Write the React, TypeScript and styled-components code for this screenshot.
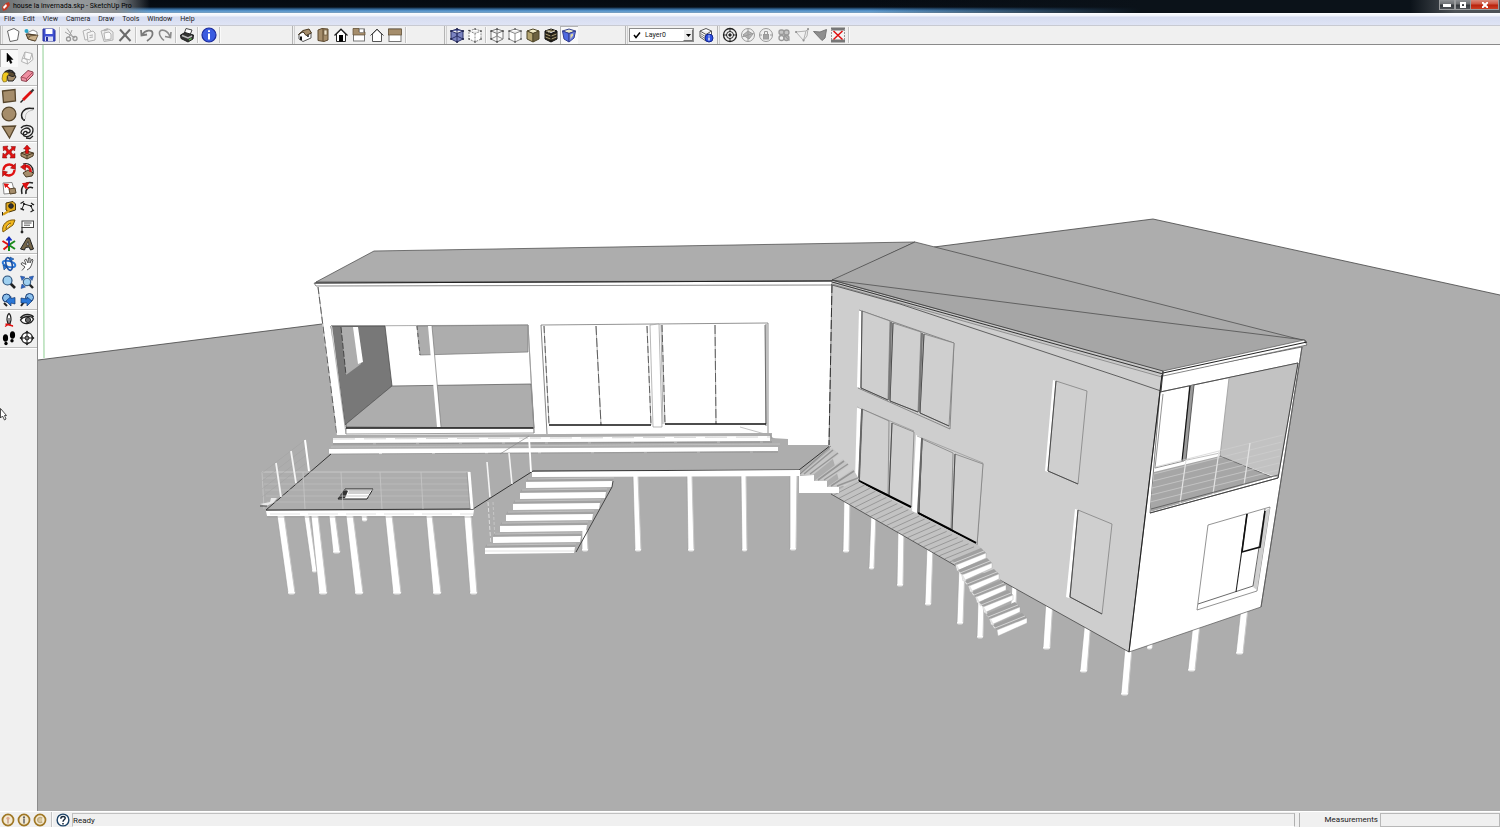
import React from "react";
import styled, { createGlobalStyle } from "styled-components";

const Global = createGlobalStyle`
  * { box-sizing: border-box; }
  body { margin: 0; background: #f0f0f0; }
  body, button, input, select { font-family: Roboto, "Open Sans", sans-serif; color: #1a1a1a; }
  button { border: 0; background: none; padding: 0; }
`;

const Window = styled.div`
  display: flex;
  flex-direction: column;
  height: 100vh;
  min-height: 480px;
  overflow: hidden;
`;

const TitleBar = styled.header`
  display: flex;
  align-items: flex-start;
  justify-content: space-between;
  height: 13px;
  flex: none;
  background:
    linear-gradient(90deg, #6c7072 0, #9a9ea0 60px, #8a8f92 115px, #10182200 150px),
    linear-gradient(90deg, #0b121900 150px, #0b121900 58%, #0b1219 76%, #0b1219 94%, #4c5156 97%),
    linear-gradient(180deg, #060b12 0, #070d15 7px, #2f6292 9px, #5c9bd3 11px, #7c9fbd 13px);
`;

const Title = styled.h1`
  display: flex;
  align-items: center;
  gap: 3px;
  margin: 0;
  padding-left: 2px;
  height: 13px;
  font-size: 7px;
  line-height: 13px;
  font-weight: 400;
  color: #000;
  white-space: nowrap;
`;

const WindowButtons = styled.div`
  display: flex;
  margin-right: 1px;
`;

const WindowButton = styled.button<{ $close?: boolean }>`
  display: flex;
  align-items: center;
  justify-content: center;
  width: ${(p) => (p.$close ? 28 : 16)}px;
  height: 10px;
  border: 1px solid #9a9c9e;
  border-top: 0;
  border-left-width: ${(p) => (p.$close ? 0 : 1)}px;
  background: ${(p) =>
    p.$close
      ? "linear-gradient(#d88a7c 0, #cf5540 4px, #b8220c 5px, #d2452a 10px)"
      : "linear-gradient(#8c8f92 0, #6d7073 4px, #34383c 5px, #55595d 10px)"};
`;

const MenuBar = styled.nav`
  display: flex;
  align-items: center;
  gap: 8px;
  height: 13px;
  flex: none;
  padding-left: 4px;
  border-bottom: 1px solid #c8cad2;
  background: linear-gradient(#fdfdff 0, #eef1fa 3px, #d6dcf0 4px, #dfe4f5 12px);
`;

const MenuItem = styled.button`
  font-size: 7px;
  line-height: 11px;
`;

const ToolBar = styled.div`
  display: flex;
  height: 19px;
  flex: none;
  border-bottom: 1px solid #8a8a8a;
  background: #f0f0f0;
`;

const Segment = styled.div<{ $span?: number }>`
  display: flex;
  align-items: center;
  flex: none;
  width: ${(p) => (p.$span ? p.$span + "px" : "auto")};
`;

const Grip = styled.span`
  width: 3px;
  height: 18px;
  flex: none;
  border-left: 1px solid #b4b4b4;
  border-right: 1px solid #d0d0d0;
  margin-right: 1px;
`;

const Divider = styled.span`
  width: 2px;
  height: 16px;
  margin: 0 1px;
  flex: none;
  border-left: 1px solid #c4c4c4;
  border-right: 1px solid #fafafa;
`;

const ToolButton = styled.button<{ $active?: boolean }>`
  display: flex;
  align-items: center;
  justify-content: center;
  width: 18px;
  height: 18px;
  flex: none;
  background: ${(p) => (p.$active ? "#f9f9f9" : "transparent")};
  box-shadow: ${(p) => (p.$active ? "inset 1px 1px 0 #b4b4b4" : "none")};
`;

const LayerPicker = styled.div`
  display: flex;
  align-items: center;
  width: 65px;
  height: 14px;
  margin: 0 3px 0 0;
  padding-left: 3px;
  border: 1px solid #8c8c8c;
  background: #fff;
`;

const LayerSelect = styled.select`
  appearance: none;
  flex: 1;
  min-width: 0;
  height: 12px;
  padding: 0 0 0 4px;
  border: 0;
  outline: 0;
  background: transparent;
  font-size: 7px;
  line-height: 12px;
`;

const DropMark = styled.span`
  display: flex;
  align-items: center;
  justify-content: center;
  width: 10px;
  height: 12px;
  border: 1px solid #fff;
  border-right-color: #777;
  border-bottom-color: #777;
  background: #ececec;
`;

const Body = styled.div`
  display: flex;
  flex: 1;
  min-height: 0;
`;

const Side = styled.aside`
  width: 38px;
  flex: none;
  padding-top: 4px;
  border-right: 1px solid #8c8c8c;
  background: #f0f0f0;
`;

const SideGroup = styled.div`
  display: grid;
  grid-template-columns: 18px 18px;
  border-bottom: 1px solid #bdbdbd;
  box-shadow: 0 1px 0 #fff;
  margin-bottom: 1px;
`;

const Pointer = styled.svg`
  display: block;
  margin-top: 60px;
`;

const Scene = styled.svg`
  display: block;
  flex: 1;
  min-width: 0;
  height: 100%;
  background: #fff;
`;

const StatusBar = styled.footer`
  display: flex;
  align-items: center;
  height: 16px;
  flex: none;
  padding-left: 1px;
  border-top: 1px solid #fff;
  background: #f0f0f0;
  font-size: 8px;
  line-height: 14px;
`;

const StatusButton = styled.button`
  display: flex;
  width: 14px;
  height: 14px;
  margin-right: 2px;
`;

const StatusDivider = styled(Divider)`
  margin: 0 3px 0 2px;
`;

const StatusText = styled.output`
  flex: 1;
  height: 14px;
  margin-right: 4px;
  border: 1px solid #c0c0c0;
  border-bottom-color: #fff;
  border-right-color: #b0b0b0;
  line-height: 14px;
`;

const MeasureLabel = styled.label`
  width: 81px;
  padding-right: 2px;
  border-left: 1px solid #b0b0b0;
  text-align: right;
`;

const MeasureInput = styled.input`
  width: 120px;
  height: 14px;
  border: 1px solid #b8b8b8;
  background: #f0f0f0;
  font-size: 8px;
`;

/* ---------- icons ---------- */

const Icon = ({ children, size = 16 }: { children: React.ReactNode; size?: number }) => (
  <svg width={size} height={size} viewBox="0 0 16 16" fill="none" stroke="#222" strokeWidth="1" aria-hidden="true">
    {children}
  </svg>
);

const TAN = "#a58d6b";
const RED = "#e01010";

const cubeEdges = "M2 4 8 2 14 4 14 12 8 15 2 12ZM2 4 8 6.5 14 4M8 6.5V15";

const icons: Record<string, React.ReactNode> = {
  new: <path d="M2.500 4 9 1.500 14 4.500 12.500 13 5 14.500Z" fill="#fff" stroke="#666" />,
  open: (
    <>
      <path d="M4 6 10 3 14 5 14 9Z" fill="#fff" stroke="#666" strokeWidth=".7" />
      <path d="M3 7 13 8 12 14 5 12Z" fill={TAN} stroke="#4a3a24" />
      <path d="M5 12 7 9 15 8 12.500 14Z" fill="#c9b08a" stroke="#4a3a24" strokeWidth=".7" />
      <circle cx="3.500" cy="4" r="2" fill="#27a5c8" stroke="none" />
    </>
  ),
  save: (
    <>
      <path d="M2 2H12.500L14 3.500V14H2Z" fill="#3f4fd0" stroke="#26309a" />
      <rect x="4.500" y="2" width="7" height="5" fill="#fff" stroke="none" />
      <rect x="4" y="9.500" width="8" height="4.500" fill="#d5d9f4" stroke="none" />
      <path d="M6 10V14" stroke="#26309a" strokeWidth="2" />
    </>
  ),
  cut: (
    <g stroke="#9a9a9a" strokeWidth="1.300">
      <path d="M4 1.500 10 10M9 3 6 10M2 5 12 11" strokeWidth=".9" />
      <circle cx="5.500" cy="12" r="2" />
      <circle cx="12" cy="11.500" r="2" />
    </g>
  ),
  copy: (
    <g stroke="#b2b2b2">
      <path d="M2 4 8 2 10 4V12L4 13Z" fill="#f4f4f4" />
      <path d="M6 6 12 4 14 6V13L7 14.500Z" fill="#f4f4f4" />
      <path d="M8.500 8.500 12 8M8.500 10.500 12 10" />
    </g>
  ),
  paste: (
    <g stroke="#b2b2b2">
      <path d="M2 4 10 2 14 5V13L5 14.500Z" fill="#ececec" />
      <path d="M5 6 10 5 12 7V12L6 13Z" fill="#fafafa" />
      <path d="M5 3.500 9 2" strokeWidth="2" />
    </g>
  ),
  erase: <path d="M3 2.500 13.500 14M13 2.500 2.500 14" stroke="#6a6a6a" strokeWidth="2" />,
  undo: (
    <path d="M2 3 2.500 8.500 8 7.500M3 8C6 3 13 2 13.500 6 14 9 11 12 8 14" stroke="#7a7a7a" strokeWidth="1.800" />
  ),
  redo: (
    <path d="M14 5 13.500 10.500 8 9.500M13 10C11 3 4 1.500 2.500 5 2 8 4 11 7 13.500" stroke="#8a8a8a" strokeWidth="1.600" />
  ),
  print: (
    <>
      <path d="M5 7 7 1.500 13 3 11 8Z" fill="#fff" stroke="#444" />
      <path d="M1.500 8 6 5.500 14.500 8 14 12 9 15 2 11.500Z" fill="#333" />
      <path d="M3 8.500 9 11 13 9" stroke="#bdbdbd" strokeWidth="1.500" />
      <path d="M10 13 12.500 11.500" stroke="#5fbf50" strokeWidth="1.400" />
    </>
  ),
  info: (
    <>
      <circle cx="8" cy="8" r="7" fill="#3a5be0" stroke="#1b2a9c" strokeWidth="1.200" />
      <path d="M8 3.200V5M8 6.500V12.500" stroke="#fff" strokeWidth="2" />
    </>
  ),
  iso: (
    <>
      <path d="M2 7V12L6 14.500 14 11V6L9 8 6 5Z" fill="#fff" stroke="#555" />
      <path d="M1.500 7.500 6 3.500 12 2 14.500 6 9 8.500 6 4.500Z" fill={TAN} stroke="#4a3a24" />
      <path d="M4 13V9.500" stroke="#111" strokeWidth="2" />
      <path d="M11 8V10" strokeWidth="1.600" />
    </>
  ),
  top: (
    <>
      <path d="M3 3 7 1.500 13 2V13L9 14.500 3 13.500Z" fill={TAN} stroke="#5d4a30" />
      <path d="M8 2V14" stroke="#5d4a30" />
      <rect x="9" y="3" width="3" height="5" fill="#eee2c8" stroke="#5d4a30" strokeWidth=".6" />
    </>
  ),
  front: (
    <>
      <path d="M3.500 7V14.500H12.500V7L8 2.500Z" fill="#fff" />
      <path d="M1.500 8.500 8 2 14.500 8.500" strokeWidth="1.200" />
      <rect x="6" y="8" width="4" height="6.500" fill="#000" stroke="none" />
    </>
  ),
  right: (
    <>
      <rect x="2.500" y="2" width="11" height="12" fill="#fff" stroke="#777" />
      <path d="M2 1.500H8V5H14V8H2Z" fill={TAN} stroke="#5d4a30" strokeWidth=".7" />
      <rect x="8.500" y="2" width="4" height="3.500" fill="#fff" stroke="#777" strokeWidth=".6" />
    </>
  ),
  back: (
    <>
      <path d="M3.500 7V14.500H12.500V7L8 2.500Z" fill="#fff" stroke="#555" />
      <path d="M1.500 8.500 8 2 14.500 8.500" stroke="#444" />
    </>
  ),
  left: (
    <>
      <rect x="2" y="2" width="12" height="12.500" fill="#fff" stroke="#777" />
      <rect x="1.500" y="2" width="13" height="6" fill={TAN} stroke="#5d4a30" strokeWidth=".7" />
    </>
  ),
  xray: (
    <>
      <path d={cubeEdges} fill="#7a83c0" stroke="#2d3268" />
      <path d="M2 12 8 9 14 12M8 2V9" stroke="#2d3268" />
      <path d="M2 4h.1M8 2h.1M14 4h.1M8 15h.1M2 12h.1M14 12h.1" stroke="#20244e" strokeWidth="2" strokeLinecap="round" />
    </>
  ),
  backEdges: (
    <>
      <path d={cubeEdges} fill="#fff" stroke="#888" strokeDasharray="2 1" />
      <path d="M2 3.500h.1M8 2h.1M14 4h.1M8 15h.1M2 12h.1M14 12h.1" stroke="#333" strokeWidth="1.600" strokeLinecap="round" />
    </>
  ),
  wire: (
    <>
      <path d={cubeEdges} stroke="#777" fill="#fafafa" />
      <path d="M2 12 8 9 14 12M8 2V9" stroke="#888" />
      <path d="M2 4h.1M8 2h.1M14 4h.1M8 15h.1M2 12h.1" stroke="#222" strokeWidth="1.600" strokeLinecap="round" />
    </>
  ),
  hidden: (
    <>
      <path d={cubeEdges} fill="#fff" stroke="#8a8a8a" />
      <path d="M2 4h.1M8 2h.1M14 4h.1M8 15h.1M2 12h.1M14 12h.1" stroke="#333" strokeWidth="1.600" strokeLinecap="round" />
    </>
  ),
  shaded: (
    <>
      <path d="M2 4 8 2 14 4 8 6.500Z" fill="#f2ecc8" stroke="#4f4628" />
      <path d="M2 4 8 6.500V15L2 12Z" fill="#b5a571" stroke="#4f4628" />
      <path d="M14 4 8 6.500V15L14 12Z" fill="#6d6240" stroke="#4f4628" />
    </>
  ),
  textured: (
    <>
      <path d={cubeEdges} fill="#2a2418" stroke="#111" />
      <path d="M3 4.200 9 2.800M5 5.300 12 3.500M2.500 7 7.500 9M2.500 10 7.500 12M8.500 9 13.500 7M8.500 12 13.500 10" stroke="#a89a70" />
    </>
  ),
  mono: (
    <>
      <path d="M1.500 4 8 2 14.500 4 8 6.500Z" fill="#eceac8" stroke="#333f90" />
      <path d="M1.500 4 8 6.500V15L3 12Z" fill="#4f6ae0" stroke="#333f90" />
      <path d="M14.500 4 8 6.500V15L13 11Z" fill="#6d80e4" stroke="#333f90" />
      <path d="M9.500 7.500 12 6.500V8.500L9.500 12Z" fill="#e0d7a0" stroke="none" />
    </>
  ),
  layers: (
    <>
      <path d="M2 4 8 1.500 13.500 4 8 7.500ZM2 4V10L8 14 13.500 11V4" fill="#fff" stroke="#555" />
      <path d="M2.500 6.500 8 10M2.500 8.500 8 12M8 7.500V13" stroke="#777" />
      <circle cx="11" cy="11" r="4" fill="#2c4fe0" stroke="#14268e" />
      <path d="M11 8.500V9.500M11 10.500V13.500" stroke="#fff" strokeWidth="1.300" />
    </>
  ),
  target: (
    <>
      <circle cx="8" cy="8" r="6.500" strokeWidth="1.300" />
      <circle cx="8" cy="8" r="3.500" />
      <circle cx="8" cy="8" r="1.200" fill="#222" />
      <path d="M8 1.500V5M8 11V14.500M1.500 8H5M11 8H14.500" />
    </>
  ),
  targetOff: (
    <g stroke="#9c9c9c">
      <circle cx="8" cy="8" r="6.500" />
      <path d="M3 8 8 4 13 7 9 12Z" fill="#b4b4b4" />
      <path d="M2 10 14 6M8 2V14" />
    </g>
  ),
  lock: (
    <g stroke="#9a9a9a">
      <circle cx="8" cy="8" r="6.500" />
      <rect x="5.500" y="7.500" width="5" height="4.500" fill="#a4a4a4" />
      <path d="M6.500 7.500V4.500H9.500V7.500M2 8H4M12 8H14" />
    </g>
  ),
  swirl: (
    <g stroke="#999" strokeWidth="1.300">
      <rect x="3" y="3" width="5" height="4.500" rx="2" fill="#c4c4c4" />
      <circle cx="10.500" cy="5.500" r="2.500" fill="#c4c4c4" />
      <circle cx="5.500" cy="11" r="2.500" />
      <circle cx="10.500" cy="11" r="2.500" fill="#c4c4c4" />
      <path d="M8 8 13.500 13.500" />
    </g>
  ),
  plane: (
    <g stroke="#b0b0b0">
      <path d="M2 5 12 4 14 2M2 5 9.500 13.500 12 4M14 2 13 9 9.500 13.500" />
      <path d="M14 2h.1M2 5h.1M9.500 13.500h.1" stroke="#909090" strokeWidth="2" strokeLinecap="round" />
    </g>
  ),
  planeFill: <path d="M1.500 4.500 8 5 14.500 2.500 13 11 10 13.500Z" fill="#8e8e8e" stroke="#777" />,
  clip: (
    <>
      <rect x="1.500" y="2" width="13" height="12" fill="#f4f4f4" stroke="none" />
      <path d="M1 2H15M1 14H15" stroke="#777" strokeWidth="3" />
      <path d="M1.500 2V14M14.500 2V14" stroke="#999" strokeDasharray="2 1" />
      <path d="M3.500 4 12.500 12.500M12.500 4 3.500 12.500" stroke={RED} strokeWidth="1.500" />
    </>
  ),
  select: <path d="M6 3V12L8 10 9.500 13.500 11 12.800 9.500 9.500H12Z" fill="#000" stroke="#000" strokeWidth=".5" />,
  component: (
    <g stroke="#b4b4b4">
      <path d="M6 2 13 3.500 14 9.500 8.500 14 2.500 11.500 3.500 8Z" fill="#fafafa" />
      <path d="M6 2 5.500 8.500 11 10 13 3.500M3.500 8 8 9.500 8.500 14" />
    </g>
  ),
  paint: (
    <>
      <path d="M3 7C3 3 8 1.500 11 3L14 6" stroke="#222" strokeWidth="1.600" />
      <path d="M6 6 12 4 15 9 12 13 7 13Z" fill={TAN} stroke="#222" />
      <ellipse cx="10" cy="6" rx="4" ry="2" fill="#5a4a30" transform="rotate(20 10 6)" />
      <path d="M1.500 8C1.500 4 6 3 8 6L6 8 5.500 13.500 2.500 14 1 11Z" fill="#f0c81e" stroke="#7a6410" strokeWidth=".7" />
    </>
  ),
  eraser: (
    <>
      <path d="M2 9 9 2.500 14 4 14 7 7.500 13.500 2.500 12.500Z" fill="#ef8ea0" stroke="#8c4450" />
      <path d="M2 9 7.500 10.500 14 4M7.500 10.500V13.500" stroke="#a8505f" />
    </>
  ),
  rect: <path d="M1.500 3 14 1.500 14.500 13 2.500 14.500Z" fill={TAN} stroke="#57462c" strokeWidth="1.300" />,
  line: (
    <>
      <path d="M4 12 12.500 3.500" stroke={RED} strokeWidth="2.800" />
      <path d="M12 4 14.500 1.500" stroke="#333" strokeWidth="2.200" />
      <path d="M1.500 14.500 4 12" strokeWidth="1.400" />
    </>
  ),
  circle: <circle cx="8" cy="8" r="6.900" fill={TAN} stroke="#57462c" strokeWidth="1.300" />,
  arc: (
    <>
      <path d="M13 2.500C5 1 0 8 4 13.500" strokeWidth="1.500" />
      <path d="M14 4C8 5 6 8 6.500 13" stroke="#aaa" strokeWidth=".7" />
      <path d="M14 2.500h.1M5 14h.1" strokeWidth="2" strokeLinecap="round" />
    </>
  ),
  polygon: <path d="M1.500 2.500 14.500 2 8.500 14Z" fill={TAN} stroke="#57462c" strokeWidth="1.300" />,
  free: (
    <path
      d="M2 4C5 0 14 1 14 6 14 11 9 14 5 12 3 9 6 6 8 8 9 11 4 12 2 9 2 5 9 2 11 6 12 9 8 10 7 7M7 14 11 14.500 14 12"
      strokeWidth="1.300"
    />
  ),
  move: (
    <g fill={RED} stroke="#7d0909" strokeWidth=".5">
      <path d="M2 2.500 7 2 6 4 8 6.500 11 4 10 2.500 14.500 2.500 13.500 7 12 5.500 10 8 12 10.500 14 9.500 14 14 9 14 10 12 8 9.500 5 12 6 14 1.500 14 2 9 4 10.500 6 8 4 5.500 2.500 7Z" />
    </g>
  ),
  push: (
    <>
      <path d="M2 9 8 7 14.500 9 14 12 8 15 2 12Z" fill={TAN} stroke="#4a3a24" />
      <path d="M2 9 8 11.500 14.500 9M8 11.500V15" stroke="#4a3a24" />
      <path d="M8 1 11.500 5H9.500V9.500H6.500V5H4.500Z" fill={RED} stroke="#7d0909" strokeWidth=".5" />
    </>
  ),
  rotate: (
    <>
      <path d="M2.500 8C3 2 10 1 13 5" stroke={RED} strokeWidth="2.400" />
      <path d="M13.500 8C13 14 6 15 3 11" stroke={RED} strokeWidth="2.400" />
      <path d="M14.500 1.500V7.500L9.500 6ZM1.500 14.500V8.500L6.500 10Z" fill={RED} stroke="#7d0909" strokeWidth=".5" />
    </>
  ),
  follow: (
    <>
      <path d="M4 11 9 8 14.500 11 13 14 7 15Z" fill={TAN} stroke="#4a3a24" />
      <path d="M4 2C10 0 15 5 14 11" stroke="#222" strokeWidth="1.200" />
      <path d="M5 4.500C9 3 12 6 11.500 10" stroke={RED} strokeWidth="2.600" />
      <path d="M1.500 5 6.500 1.500V8.500Z" fill={RED} stroke="#7d0909" strokeWidth=".5" />
    </>
  ),
  scale: (
    <>
      <path d="M2 3 11 2.500 14 13 3 14Z" fill="#fff" stroke="#888" />
      <path d="M8 9 14 8 15 13 9 14Z" fill={TAN} stroke="#57462c" />
      <path d="M9 9 4 4.500M3.500 4 7 4.500 4.500 7Z" fill={RED} stroke={RED} strokeWidth="1.200" />
    </>
  ),
  offset: (
    <>
      <path d="M14 3C7 1 1 6 3 14M14 8C10 6 6 9 7 14" strokeWidth="1.500" />
      <path d="M9 9 6 5M4 3.500 9.500 3 6.500 8Z" fill={RED} stroke={RED} strokeWidth="1.200" />
    </>
  ),
  tape: (
    <>
      <path d="M5 3 12 1.500 14.500 4V10L8 12 5 10Z" fill="#e2a91c" stroke="#4a3608" />
      <circle cx="10" cy="6" r="2.300" fill="#333" />
      <path d="M2 14.500 8 11" stroke="#d9a016" strokeWidth="2.200" />
      <path d="M1.500 12V15.500" />
    </>
  ),
  dimension: (
    <>
      <path d="M3 9 5 4 12 6 14 11M3 2 6 5M12 6 14 4" />
      <path d="M1.500 3.500 5 1.500M12 3 15 5M1.500 8.500 5 10M11.500 12 15 10" strokeWidth="1.400" />
      <path d="M5 4h.1M12 6h.1" strokeWidth="2.200" strokeLinecap="round" />
    </>
  ),
  protractor: (
    <>
      <path d="M2 14C0 7 6 1 14 2L12 7Z" fill="#f2b71d" stroke="#7d5a08" />
      <path d="M5 11C5 8 7 6 10 5" fill="#f0f0f0" stroke="#7d5a08" />
    </>
  ),
  label: (
    <>
      <rect x="3" y="3" width="11.500" height="6.500" fill="#fff" stroke="#444" />
      <path d="M5 5H12.500M5 7.200H11" stroke="#555" />
      <path d="M3 9V14" />
      <circle cx="3" cy="14" r="1" fill="#000" />
    </>
  ),
  axes: (
    <>
      <path d="M1.500 5 8 9M2.500 13.500 8 9" stroke={RED} strokeWidth="2" />
      <path d="M8 9 14 5M8 15V9M8 9 14 13" stroke="#1a8a1a" strokeWidth="2" />
      <path d="M8 10V2M5.500 4.500 8 1.500 10.500 4.500" stroke="#1530c0" strokeWidth="1.800" />
    </>
  ),
  text3d: (
    <>
      <path d="M1.500 13 8 2 10.500 2 14.500 13 11.500 14 10 11 6.500 11.500 5.500 14Z" fill="#75664a" stroke="#222" />
      <path d="M7.500 9 9 5.500 10 9Z" fill="#f0f0f0" strokeWidth=".7" />
    </>
  ),
  orbit: (
    <>
      <ellipse cx="8" cy="8" rx="6.500" ry="3" stroke="#2b78d8" strokeWidth="2" transform="rotate(15 8 8)" />
      <ellipse cx="8" cy="8" rx="3" ry="6.500" stroke="#1c4fa0" strokeWidth="1.600" transform="rotate(-15 8 8)" />
      <path d="M9 1 13 3 9 5.500ZM2 9 6 11 3 14Z" fill="#2b78d8" stroke="#12366f" strokeWidth=".5" />
    </>
  ),
  pan: (
    <path
      d="M3 14.500 6 11 2 8 3 6.500 7 8.500 5.500 4 7 3 9 7 9.500 2 11 2 11 7 13 3 14 4 12.500 9 11 12 8 14"
      fill="#fff"
      stroke="#555"
    />
  ),
  zoom: (
    <>
      <path d="M9.500 9.500 14 14" strokeWidth="2.600" />
      <circle cx="6.500" cy="6.500" r="4.500" fill="#9fd0f0" stroke="#2a4f78" strokeWidth="1.200" />
    </>
  ),
  extents: (
    <>
      <path d="M10 10 14 14" strokeWidth="2.400" />
      <path d="M1.500 2 6 3 3 6.500ZM14.500 2 10 3 13 6.500ZM2 14.500 3 10 6.500 13Z" fill="#2b66c8" stroke="#173a7c" strokeWidth=".5" />
      <circle cx="8" cy="8" r="3.800" fill="#9fd0f0" stroke="#2a4f78" />
    </>
  ),
  previous: (
    <>
      <path d="M3 11 6 14" strokeWidth="2" />
      <circle cx="5.500" cy="6" r="4" fill="#8cc0ec" stroke="#12366f" />
      <path d="M5 9 10 4.500V6.500L14 5.500 14 12 10 11V14Z" fill="#2b78d8" stroke="#12366f" strokeWidth=".7" />
    </>
  ),
  next: (
    <>
      <path d="M5 10 2 14" strokeWidth="2" />
      <circle cx="10.500" cy="5.500" r="4" fill="#8cc0ec" stroke="#12366f" />
      <path d="M13 9 8 5V7L2 6 2 11 8 11V14Z" fill="#2b78d8" stroke="#12366f" strokeWidth=".7" />
    </>
  ),
  position: (
    <>
      <path d="M8 1.500C10 3 10 6 10 8L9 12H7L6 8C6 6 6 3 8 1.500Z" fill="#fff" strokeWidth="1.200" />
      <path d="M4 14.500 8 12 12 14.500M4.500 12 12 14" stroke={RED} strokeWidth="1.300" />
      <path d="M8 6V12" />
    </>
  ),
  look: (
    <>
      <path d="M1.500 8C4 4 12 3 14.500 7 12 13 4 13 1.500 8Z" fill="#fff" strokeWidth="1.300" />
      <circle cx="9" cy="8" r="2.600" fill="#666" />
      <path d="M1.500 6C5 1 12 2 14.500 5" strokeWidth="1.600" />
    </>
  ),
  walk: (
    <g fill="#000" stroke="none">
      <ellipse cx="4.500" cy="8" rx="2.600" ry="3.800" />
      <ellipse cx="5" cy="13.500" rx="1.700" ry="1.700" />
      <ellipse cx="11.500" cy="5" rx="2.600" ry="3.800" />
      <ellipse cx="11" cy="10.700" rx="1.700" ry="1.700" />
    </g>
  ),
  section: (
    <>
      <circle cx="8" cy="8" r="5.500" fill="#fff" strokeWidth="1.200" />
      <path d="M8 1V15M1 8H15" />
      <circle cx="8" cy="8" r="2" fill="#777" />
      <path d="M8 .5 10.500 3.500H5.500ZM8 15.500 10.500 12.500H5.500ZM.5 8 3.500 5.500V10.500ZM15.500 8 12.500 5.500V10.500Z" fill="#222" stroke="none" />
    </>
  ),
  coin: (
    <>
      <circle cx="8" cy="8" r="6.300" fill="#f4ead2" stroke="#a07826" strokeWidth="2" />
      <circle cx="8" cy="6" r="1.800" fill="#e0a890" stroke="none" />
      <path d="M8 7V12" stroke="#c49a86" strokeWidth="1.600" />
    </>
  ),
  coinDark: (
    <>
      <circle cx="8" cy="8" r="6.300" fill="#f4ead2" stroke="#a07826" strokeWidth="2" />
      <circle cx="8" cy="5" r="1.300" fill="#666" stroke="none" />
      <path d="M8 6.500V12" stroke="#777" strokeWidth="2" />
    </>
  ),
  coinRing: (
    <>
      <circle cx="8" cy="8" r="6.300" fill="#f4ead2" stroke="#a07826" strokeWidth="2" />
      <path d="M10.500 6A3 3 0 1 0 10.500 10" fill="#d8c69c" stroke="#c0ab80" strokeWidth="1.500" />
    </>
  ),
  help: (
    <>
      <circle cx="8" cy="8" r="6.700" fill="#fff" stroke="#1e4468" strokeWidth="1.600" />
      <path d="M5.500 6.500C5.500 3 10.800 3.200 10.500 6 10.300 7.800 8 7.800 8 10M8 11.300V13" stroke="#14263a" strokeWidth="1.700" />
    </>
  ),
};

const Tools = ({ names, active }: { names: string[]; active?: string }) => (
  <>
    {names.map((n) => (
      <ToolButton key={n} $active={n === active} aria-label={n}>
        <Icon>{icons[n]}</Icon>
      </ToolButton>
    ))}
  </>
);

const sideGroups = [
  ["select", "component", "paint", "eraser"],
  ["rect", "line", "circle", "arc", "polygon", "free"],
  ["move", "push", "rotate", "follow", "scale", "offset"],
  ["tape", "dimension", "protractor", "label", "axes", "text3d"],
  ["orbit", "pan", "zoom", "extents", "previous", "next"],
  ["position", "look", "walk", "section"],
];

/* ---------- model ---------- */

const GROUND = "#adadad";

type Quad = number[];
const pts = (q: Quad) => q.reduce((s, v, i) => s + v + (i % 2 ? " " : ","), "");

const Face = ({ q, fill = "#fff", line = "none", w = 0.7 }: { q: Quad; fill?: string; line?: string; w?: number }) => (
  <polygon points={pts(q)} fill={fill} stroke={line} strokeWidth={w} />
);

const Edge = ({ q, c = "#444", w = 0.8, dash }: { q: Quad; c?: string; w?: number; dash?: string }) => (
  <polyline points={pts(q)} fill="none" stroke={c} strokeWidth={w} strokeDasharray={dash} />
);

/* a continuous grey edge with darker dashes over it */
const Seam = ({ q, dash = "7 3" }: { q: Quad; dash?: string }) => (
  <>
    <Edge q={q} c="#a8a8a8" w={0.9} />
    <Edge q={q} c="#555" w={0.9} dash={dash} />
  </>
);

/* top-left x, top-right x, top y, bottom-left x, bottom-right x, bottom y */
const piles: Quad[] = [
  [304, 309, 515, 312, 317, 571], [329, 335, 515, 333, 340, 552], [361, 367, 515, 362, 367, 520],
  [277, 284, 515, 288, 295, 593], [311, 318, 515, 319, 327, 593], [346, 353, 515, 355, 363, 593],
  [385, 392, 515, 393, 401, 593], [426, 432, 515, 433, 441, 593], [464, 471, 515, 470, 477, 593],
  [582, 587, 530, 582, 588, 550], [633, 638, 476, 635, 641, 550], [687, 692, 476, 688, 694, 550],
  [741, 746, 476, 742, 747, 550], [790, 797, 476, 790, 796, 549], [844, 850, 498, 843, 849, 551],
  [871, 876, 514, 869, 874, 568], [898, 904, 530, 897, 903, 585], [927, 933, 546, 925, 931, 604],
  [959, 965, 566, 957, 963, 623], [978, 984, 600, 977, 983, 637], [1012, 1017, 584, 1011, 1016, 604],
  [1046, 1053, 600, 1043, 1050, 648], [1085, 1091, 620, 1080, 1087, 671], [1125, 1132, 648, 1121, 1128, 694],
  [1147, 1153, 642, 1147, 1152, 648], [1193, 1200, 624, 1188, 1195, 670], [1241, 1248, 608, 1236, 1243, 653],
];

const stairs: Quad[] = [
  [526, 613, 481], [520, 606, 492], [513, 600, 503], [506, 593, 514], [500, 587, 525], [493, 581, 536], [485, 575, 547],
];

const lowSteps: Quad[] = [
  [956, 565, 986, 553], [962, 575, 992, 563], [969, 586, 999, 574], [976, 597, 1006, 585],
  [983, 607, 1013, 595], [990, 619, 1020, 607], [997, 630, 1027, 618],
];

const landingSteps: Quad[] = [
  [800, 475, 832, 448, 839, 454, 813, 475],
  [814, 481, 843, 459, 849, 465, 827, 481],
  [827, 487, 853, 469, 859, 479, 840, 487],
];

const sidePanes: Quad[] = [
  [862, 311, 890, 321, 888, 400, 861, 388], [893, 323, 921, 332, 918, 412, 890, 401],
  [924, 334, 954, 343, 949, 426, 920, 413], [862, 409, 889, 421, 888, 495, 859, 481],
  [892, 423, 914, 432, 911, 507, 889, 496], [922, 439, 953, 453, 951, 529, 919, 513],
  [955, 454, 983, 464, 977, 545, 952, 530], [1056, 381, 1087, 391, 1078, 484, 1048, 471],
  [1078, 510, 1112, 524, 1102, 614, 1070, 597],
];

const range = (n: number) => Array.from({ length: n }, (_, i) => i);

const House = () => (
  <Scene viewBox="38 45 1462 766" preserveAspectRatio="xMinYMin slice" role="img" aria-label="House model">
    <Face q={[38, 360, 322, 324, 934, 247, 1153, 219, 1500, 295, 1500, 811, 38, 811]} fill={GROUND} />
    <Edge q={[38, 360, 322, 324]} />
    <Edge q={[934, 247, 1153, 219, 1500, 295]} />
    <Edge q={[43, 45, 44, 358]} c="#8fce93" w={1} />

    {piles.map((p, i) => (
      <g key={i}>
        <Face q={[p[0], p[2], p[1], p[2], p[4], p[5], p[3], p[5]]} />
        <Edge q={[p[0], p[2], p[3], p[5]]} c="#9a9a9a" w={0.6} />
        <Edge q={[p[1], p[2], p[4], p[5]]} c="#c8c8c8" w={1} />
        <ellipse cx={(p[3] + p[4]) / 2} cy={p[5]} rx={(p[4] - p[3]) / 2} ry="1.500" fill="#fff" />
        <Edge q={[p[3], p[5] + 1, p[4], p[5] + 1]} c="#a0a0a0" w={0.5} />
      </g>
    ))}

    {/* left wing */}
    <Face q={[317, 286, 832, 283, 829, 445, 788, 446, 770, 436, 337, 437]} />
    <Seam q={[318, 287, 337, 436]} />
    <Face q={[316, 282, 374, 251, 915, 242, 832, 281]} fill={GROUND} line="#444" />
    <Face q={[314, 283, 832, 281, 832, 285, 316, 286]} line="#555" />
    <Edge q={[315, 283, 832, 281]} c="#222" w={1.2} />

    <Face q={[331, 326, 528, 325, 534, 428, 345, 429]} line="#888" />
    <Face q={[331, 326, 385, 326, 392, 386, 345, 425]} fill="#787878" line="#444" />
    <Face q={[341, 327, 354, 327, 361, 364, 346, 375]} fill={GROUND} />
    <Edge q={[341, 327, 346, 375]} c="#333" w={0.8} dash="6 2" />
    <Face q={[353, 327, 358, 327, 363, 362, 358, 364]} />
    <Face q={[417, 326, 528, 325, 528, 352, 420, 355]} fill={GROUND} line="#777" />
    <Face q={[392, 386, 531, 384, 534, 428, 346, 427, 346, 424]} fill={GROUND} line="#555" />
    <Face q={[428, 326, 432, 326, 441, 427, 437, 427]} />
    <Edge q={[432, 326, 441, 427]} c="#777" w={0.7} />
    <Seam q={[417, 326, 420, 355]} dash="4 3" />
    <Face q={[331, 326, 332, 326, 346, 434, 337, 436]} />
    <Edge q={[331, 326, 346, 434]} c="#888" w={0.6} />
    <Face q={[346, 428, 534, 428, 534, 433, 346, 434]} line="#777" />
    <Edge q={[346, 428, 534, 428]} c="#222" w={1.3} />
    <Edge q={[528, 325, 534, 433]} c="#999" />

    <Edge q={[541, 325, 768, 323, 768, 434]} c="#777" />
    <Face q={[765, 324, 768, 324, 768, 426, 765, 426]} fill="#c0c0c0" />
    <Edge q={[541, 325, 547, 434]} c="#666" />
    <Seam q={[544, 326, 549, 424]} />
    <Seam q={[596, 326, 601, 425]} dash="9 3" />
    <Seam q={[647, 326, 651, 425]} />
    <Face q={[650, 325, 659, 324, 662, 427, 653, 427]} line="#999" />
    <Edge q={[661, 325, 663, 424]} c="#999" w={0.8} />
    <Seam q={[662, 325, 665, 424]} />
    <Seam q={[715, 325, 716, 424]} dash="9 3" />
    <Edge q={[765, 325, 766, 424]} c="#555" w={0.8} />
    <Edge q={[549, 425, 651, 425]} c="#111" w={1.5} />
    <Edge q={[665, 424, 766, 424]} c="#111" w={1.5} />
    <Edge q={[740, 427, 772, 436]} c="#999" w={0.6} />

    {/* terrace */}
    <Face q={[334, 435, 772, 433, 772, 438, 788, 439, 788, 445, 831, 445, 799, 470, 533, 471, 473, 509, 267, 510, 331, 454]} fill={GROUND} />
    <Face q={[333, 438, 770, 436, 770, 441, 333, 443]} />
    <Edge q={[333, 444, 772, 442]} c="#8a8a8a" w={0.8} dash="40 3" />
    <Edge q={[333, 439, 770, 437]} c="#c4c4c4" w={0.7} dash="22 9" />
    <Edge q={[331, 447, 780, 444]} c="#c4c4c4" w={0.8} />
    <Face q={[329, 449, 778, 447, 778, 451, 329, 454]} />
    <Edge q={[329, 454, 778, 452]} c="#888" w={0.6} dash="50 3" />
    <Edge q={[770, 434, 772, 439]} c="#999" />
    <Edge q={[831, 445, 799, 470, 533, 471, 473, 509, 266, 510, 331, 454]} c="#333" w={1} />
    <Face q={[532, 472, 800, 470, 800, 476, 532, 477]} />
    <Face q={[266, 511, 474, 510, 473, 516, 267, 516]} />
    <Edge q={[267, 517, 473, 517]} c="#999" w={0.6} />
    <Edge q={[270, 514, 473, 514]} c="#ccc" w={0.6} dash="30 8" />
    <Face q={[345, 489, 373, 489, 367, 499, 338, 499]} line="#222" w={1} />
    <Face q={[345, 489, 348, 491, 345, 498, 338, 499]} fill="#333" />
    <Face q={[349, 490, 371, 490, 369, 494, 348, 494]} fill="#d0d0d0" />

    {range(6).map((i) => (
      <Edge key={i} q={[262 + i, 472 + i * 6, 470, 472 + i * 6]} c={i ? "#bcbcbc" : "#cfcfcf"} w={0.8} />
    ))}
    {[262, 303, 341, 380, 421].map((x) => (
      <Edge key={x} q={[x, 472, x + 2, 509]} c="#c6c6c6" w={0.8} />
    ))}
    {range(4).map((i) => (
      <Edge key={i} q={[262, 473 + i * 8, 305, 440 + i * 8]} c="#a0a0a0" w={0.5} />
    ))}
    <Edge q={[305, 440, 309, 471]} c="#fff" w={2} />
    <Edge q={[291, 451, 296, 483]} c="#f4f4f4" w={1.8} />
    <Edge q={[276, 463, 281, 497]} c="#f4f4f4" w={1.8} />
    <Edge q={[469, 472, 472, 509]} c="#fff" w={3} />
    <Edge q={[467, 472, 470, 509]} c="#888" w={0.5} />
    <Edge q={[487, 462, 490, 497]} c="#f4f4f4" w={1.6} />
    <Edge q={[509, 453, 512, 484]} c="#f4f4f4" w={1.6} />
    <Edge q={[529, 437, 531, 472]} c="#fff" w={1.8} />
    <Edge q={[500, 454, 529, 436]} c="#888" w={0.7} />
    <Edge q={[488, 502, 491, 546]} c="#ddd" w={1} dash="4 2" />
    <Edge q={[493, 502, 495, 540]} c="#ccc" w={0.8} dash="3 2" />
    <Face q={[260, 504, 270, 502, 271, 498, 277, 498, 273, 503, 266, 506]} fill="#e8e8e8" />
    <Edge q={[260, 506, 267, 506]} c="#333" />

    {stairs.map(([l, r, y]) => (
      <g key={y}>
        <Face q={[l + 2, y - 3, r + 1, y - 3, r, y, l, y]} fill="#a2a2a2" />
        <Edge q={[l + 2, y - 2, r + 1, y - 3]} c="#cacaca" w={0.8} />
        <Face q={[l, y + 1, r, y, r - 1, y + 6, l, y + 7]} />
      </g>
    ))}
    <Edge q={[485, 551, 575, 551]} c="#ccc" w={0.6} />
    <Edge q={[613, 481, 612, 487, 576, 552]} c="#444" w={1} />

    {/* right wing, long side */}
    <Face q={[832, 281, 1163, 373, 1161, 391, 1129, 652, 1000, 580, 958, 562, 840, 484, 829, 445]} fill="#cecece" />
    <Edge q={[832, 284, 829, 445]} c="#888" w={1} />
    <Edge q={[832, 284, 829, 445]} c="#333" w={1} dash="9 3" />
    <Edge q={[1000, 580, 1129, 652]} c="#444" />
    <Face q={[832, 280, 915, 242, 1306, 341, 1163, 371]} fill="#a9a9a9" line="#444" />
    <Face q={[832, 280, 887, 287, 1120, 317, 1305, 340, 1163, 371]} fill="#a6a6a6" />
    <Edge q={[832, 280, 887, 287, 1120, 317, 1305, 340]} w={0.7} />
    <Face q={[832, 281, 1163, 371, 1163, 376, 832, 285]} fill="#c8c8c8" />
    <Edge q={[832, 280, 1163, 371]} c="#444" w={0.9} />
    <Edge q={[832, 282, 1163, 374]} c="#333" w={1} />
    <Edge q={[832, 284, 1162, 377]} c="#666" w={0.6} />
    <Edge q={[832, 285, 900, 304, 1120, 377, 1161, 391]} w={0.8} />

    <Face q={[859, 310, 862, 311, 860, 388, 857, 387]} />
    <Face q={[857, 407, 861, 408, 858, 480, 855, 479]} />
    <Face q={[916, 435, 921, 437, 917, 513, 912, 512]} />
    <Face q={[1053, 380, 1056, 381, 1048, 472, 1045, 471]} />
    <Face q={[1075, 509, 1078, 510, 1069, 598, 1066, 597]} />
    <Edge q={[859, 310, 954, 343, 950, 429, 858, 388]} c="#777" />
    <Edge q={[857, 407, 914, 431]} c="#888" w={0.6} />
    <Edge q={[917, 436, 983, 463, 977, 546]} c="#888" w={0.6} />
    {sidePanes.map((q, i) => (
      <g key={i}>
        <Face q={q} fill="#cfcfcf" line="#777" w={0.7} />
        <Edge q={[q[0], q[1], q[6], q[7], q[4], q[5]]} c="#444" w={0.9} />
      </g>
    ))}
    <Edge q={[891, 322, 889, 400]} c="#777" w={2} />
    <Edge q={[922, 333, 919, 412]} c="#777" w={2} />
    <Edge q={[862, 409, 859, 481]} c="#666" w={1.8} />
    <Edge q={[922, 438, 918, 513]} c="#666" w={1.8} />
    <Edge q={[859, 481, 911, 507]} c="#000" w={2} />
    <Edge q={[918, 513, 976, 543]} c="#000" w={2} />

    {/* boardwalk */}
    <Face q={[831, 494, 856, 480, 912, 511, 978, 545, 987, 554, 956, 566]} fill="#c2c2c2" />
    {range(24).map((i) => {
      const t = i / 23;
      return (
        <Edge
          key={i}
          q={[834 + 121 * t, 495 + 70 * t, 859 + 126 * t, 482 + 71 * t]}
          c="#999"
          w={1}
        />
      );
    })}
    <Edge q={[831, 494, 956, 566]} c="#444" />
    <Face q={[799, 476, 814, 475, 814, 481, 827, 481, 827, 487, 839, 487, 839, 493, 799, 493]} />
    {landingSteps.map((q, i) => (
      <g key={i}>
        <Face q={q} fill="#c6c6c6" />
        <Edge q={[q[0] + 4, q[1] - 1, q[2] + 1, q[3] + 2]} c="#969696" w={1.6} />
        <Edge q={[q[6] - 3, q[7] - 1, q[4] - 1, q[5] - 1]} c="#969696" w={1.4} />
      </g>
    ))}
    <Edge q={[800, 474, 831, 446]} c="#777" w={0.7} />

    {lowSteps.map(([x1, y1, x2, y2], i) => (
      <g key={i}>
        <Face q={[x1, y1, x2, y2, x2 - 5, y2 - 5, x1 - 4, y1 - 5]} fill="#a0a0a0" />
        <Edge q={[x1 - 2, y1 - 2, x2 - 2, y2 - 2]} c="#d4d4d4" w={1} />
        <Face q={[x1, y1, x2, y2, x2, y2 + 5, x1 + 1, y1 + 6]} line="#aaa" w={0.4} />
        {i < lowSteps.length - 1 && <Edge q={[x1, y1, x1 + 5, y1 + 9]} c="#e4e4e4" w={1.6} />}
      </g>
    ))}

    {/* right wing, gable side */}
    <Face q={[1162, 375, 1302, 347, 1261, 607, 1129, 652]} line="#555" />
    <Face q={[1160, 392, 1298, 363, 1278, 478, 1150, 513]} line="#444" />
    <Face q={[1229, 378, 1298, 363, 1278, 478, 1220, 456]} fill="#c2c2c2" />
    <Face q={[1154, 472, 1220, 456, 1272, 477, 1150, 512]} fill="#a6a6a6" />
    <Edge q={[1160, 392, 1298, 363]} />
    <Edge q={[1229, 378, 1220, 456]} c="#999" />
    <Edge q={[1220, 456, 1272, 477]} c="#555" />
    <Edge q={[1163, 394, 1155, 468, 1184, 461]} c="#777" />
    <Face q={[1189, 386, 1194, 385, 1186, 461, 1182, 461]} fill="#9a9a9a" />
    <Edge q={[1190, 386, 1182, 461]} c="#111" w={1.2} />
    <Edge q={[1194, 385, 1186, 460]} c="#444" w={0.8} />
    <Edge q={[1187, 460, 1220, 453]} c="#999" w={0.6} />
    {range(6).map((i) => (
      <Edge key={i} q={[1155 - i, 467 + i * 7, 1283 - i, 435 + i * 7]} c="#cfcfcf" w={0.7} />
    ))}
    <Edge q={[1186, 460, 1180, 503]} c="#e4e4e4" w={1.2} />
    <Edge q={[1219, 451, 1213, 494]} c="#e4e4e4" w={1.2} />
    <Edge q={[1250, 443, 1244, 485]} c="#e4e4e4" w={1.2} />
    <Edge q={[1151, 509, 1278, 475]} c="#666" w={1} />
    <Edge q={[1150, 513, 1278, 478, 1298, 363]} c="#444" w={1} />
    <Edge q={[1302, 347, 1261, 607]} c="#555" />
    <Edge q={[1162, 375, 1129, 652]} c="#222" w={1.1} />
    <Face q={[1163, 371, 1304, 340, 1307, 345, 1163, 376]} line="#555" />
    <Edge q={[1163, 373, 1307, 342]} c="#222" w={1.1} />
    <Edge q={[1163, 371, 1161, 391]} c="#333" w={1} />

    <Edge q={[1208, 525, 1270, 507, 1257, 591, 1197, 610, 1208, 525]} c="#777" />
    <Face q={[1266, 510, 1270, 508, 1257, 590, 1253, 587]} fill="#cfcfcf" />
    <Edge q={[1198, 604, 1253, 586, 1265, 509]} c="#444" />
    <Edge q={[1247, 514, 1236, 592]} c="#222" w={1.1} />
    <Edge q={[1247, 514, 1242, 552, 1260, 547, 1265, 511]} c="#111" w={1.6} />
  </Scene>
);

const menus = ["File", "Edit", "View", "Camera", "Draw", "Tools", "Window", "Help"];

export default function App() {
  return (
    <Window>
      <Global />
      <TitleBar>
        <Title>
          <svg width="8" height="9" viewBox="0 0 8 9" aria-hidden="true">
            <path d="M0 5 4 1 7 0 8 3 4 8 1 9Z" fill="#c63a24" />
            <path d="M1 5 4 2 5 4 2 7Z" fill="#fff" />
          </svg>
          house la invernada.skp - SketchUp Pro
        </Title>
        <WindowButtons>
          <WindowButton aria-label="Minimize">
            <svg width="8" height="6"><rect x="0" y="2" width="8" height="3" fill="#fff" /></svg>
          </WindowButton>
          <WindowButton aria-label="Restore">
            <svg width="6" height="6"><rect x="1" y="1" width="4" height="4" fill="none" stroke="#fff" strokeWidth="2" /></svg>
          </WindowButton>
          <WindowButton $close aria-label="Close">
            <svg width="6" height="6"><path d="M0 0 6 6M6 0 0 6" stroke="#fff" strokeWidth="2" /></svg>
          </WindowButton>
        </WindowButtons>
      </TitleBar>
      <MenuBar>
        {menus.map((m) => (
          <MenuItem key={m}>{m}</MenuItem>
        ))}
      </MenuBar>
      <ToolBar>
        <Segment $span={292}>
          <Grip />
          <Tools names={["new", "open", "save"]} />
          <Divider />
          <Tools names={["cut", "copy", "paste", "erase"]} />
          <Divider />
          <Tools names={["undo", "redo"]} />
          <Divider />
          <Tools names={["print"]} />
          <Divider />
          <Tools names={["info"]} />
          <Divider />
        </Segment>
        <Segment $span={152}>
          <Grip />
          <Tools names={["iso", "top", "front", "right", "back", "left"]} />
          <Divider />
        </Segment>
        <Segment $span={181}>
          <Grip />
          <Tools names={["xray", "backEdges"]} />
          <Divider />
          <Tools names={["wire", "hidden", "shaded", "textured", "mono"]} active="mono" />
        </Segment>
        <Segment $span={92}>
          <Grip />
          <LayerPicker>
            <svg width="8" height="8" viewBox="0 0 8 8" aria-hidden="true">
              <path d="M1 4 3 6.500 7 1.500" fill="none" stroke="#000" strokeWidth="1.500" />
            </svg>
            <LayerSelect aria-label="Layer" defaultValue="Layer0">
              <option>Layer0</option>
            </LayerSelect>
            <DropMark>
              <svg width="5" height="3" aria-hidden="true"><path d="M0 0H5L2.500 3Z" fill="#000" /></svg>
            </DropMark>
          </LayerPicker>
          <Tools names={["layers"]} />
        </Segment>
        <Segment>
          <Grip />
          <Tools names={["target", "targetOff", "lock", "swirl", "plane", "planeFill", "clip"]} />
          <Divider />
        </Segment>
      </ToolBar>
      <Body>
        <Side>
          {sideGroups.map((g) => (
            <SideGroup key={g[0]}>
              <Tools names={g} active="select" />
            </SideGroup>
          ))}
          <Pointer width="8" height="13" viewBox="0 0 8 13" aria-hidden="true">
            <path d="M.5 .5V10L2.500 8 4.500 12 6 11 4.500 7.500H6.500Z" fill="#fff" stroke="#222" strokeWidth=".8" />
          </Pointer>
        </Side>
        <House />
      </Body>
      <StatusBar>
        <StatusButton aria-label="Geo-location"><Icon size={14}>{icons.coin}</Icon></StatusButton>
        <StatusButton aria-label="Credits"><Icon size={14}>{icons.coinDark}</Icon></StatusButton>
        <StatusButton aria-label="Sign in"><Icon size={14}>{icons.coinRing}</Icon></StatusButton>
        <StatusDivider />
        <StatusButton aria-label="Help"><Icon size={14}>{icons.help}</Icon></StatusButton>
        <StatusText>Ready</StatusText>
        <MeasureLabel htmlFor="measure">Measurements</MeasureLabel>
        <MeasureInput id="measure" />
      </StatusBar>
    </Window>
  );
}
